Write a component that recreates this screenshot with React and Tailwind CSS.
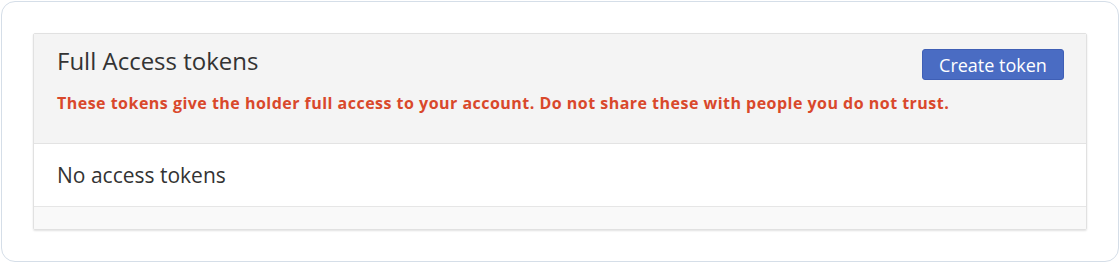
import React from 'react';

const TokensPanel = () => {
  return (
    <div className="bg-white border border-[#d5dee8] rounded-[14px] m-px h-[261px] px-[31px] pt-[31px] font-['Open_Sans',sans-serif]">
      <div className="border border-[#e1e1e1] rounded-[2px] shadow-[0_1px_2px_rgba(0,0,0,0.12)] overflow-hidden">
        <div className="bg-[#f4f4f4] h-[110px] pl-[23px] pr-[22px] pt-[11px] border-b border-[#e3e3e3]">
          <div className="flex items-start justify-between">
            <h2 className="text-[24px] leading-8 text-[#333] font-normal">Full Access tokens</h2>
            <button className="mt-[4px] h-[31px] w-[142px] bg-[#4a6cc3] text-white text-[18px] leading-none rounded-[3px] border border-[#3f5fb5]">
              Create token
            </button>
          </div>
          <p className="mt-[13px] text-[16px] leading-5 font-bold text-[#d9482b] tracking-[0.48px]">
            These tokens give the holder full access to your account. Do not share these with people you do not trust.
          </p>
        </div>
        <div className="bg-white pl-[23px] h-[63px] flex items-center border-b border-[#e6e6e6]">
          <span className="text-[21px] text-[#333] mt-[2px]">No access tokens</span>
        </div>
        <div className="bg-[#f9f9f9] h-[22px]" />
      </div>
    </div>
  );
};

export default function App() {
  return (
    <div className="w-[1120px] h-[263px] bg-white">
      <TokensPanel />
    </div>
  );
}
